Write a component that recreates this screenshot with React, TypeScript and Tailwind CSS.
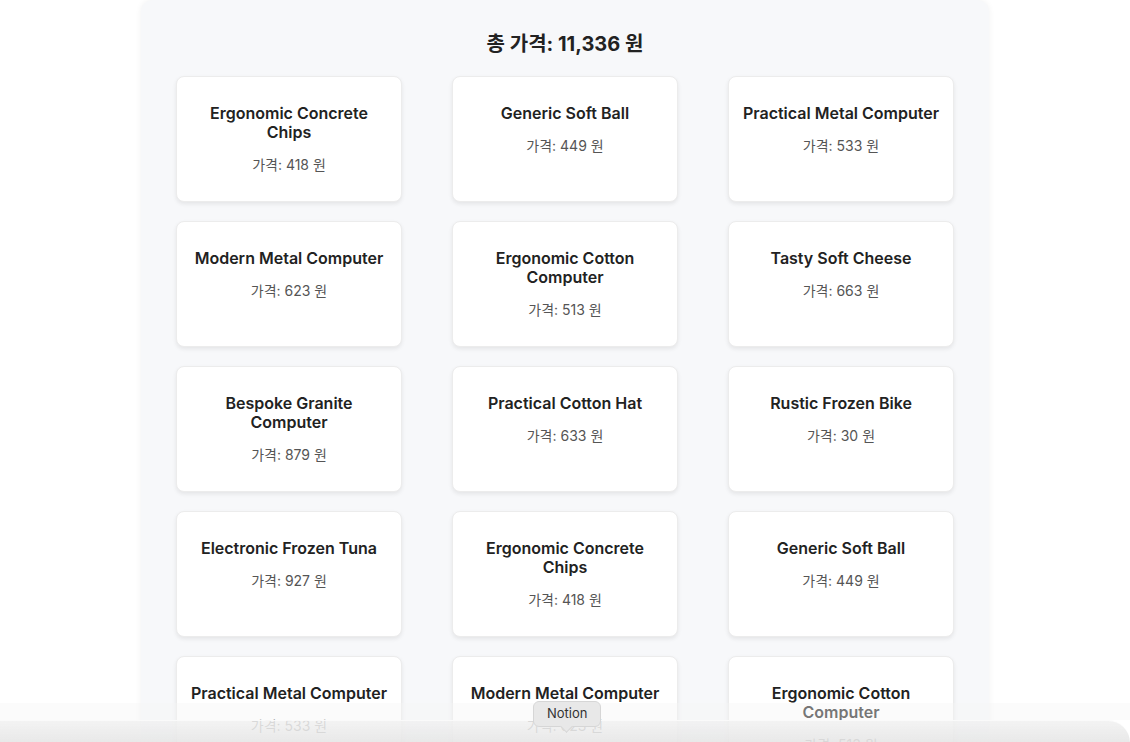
const products = [
  { name: 'Ergonomic Concrete Chips', price: 418 },
  { name: 'Generic Soft Ball', price: 449 },
  { name: 'Practical Metal Computer', price: 533 },
  { name: 'Modern Metal Computer', price: 623 },
  { name: 'Ergonomic Cotton Computer', price: 513 },
  { name: 'Tasty Soft Cheese', price: 663 },
  { name: 'Bespoke Granite Computer', price: 879 },
  { name: 'Practical Cotton Hat', price: 633 },
  { name: 'Rustic Frozen Bike', price: 30 },
  { name: 'Electronic Frozen Tuna', price: 927 },
  { name: 'Ergonomic Concrete Chips', price: 418 },
  { name: 'Generic Soft Ball', price: 449 },
  { name: 'Practical Metal Computer', price: 533 },
  { name: 'Modern Metal Computer', price: 623 },
  { name: 'Ergonomic Cotton Computer', price: 513 },
]

function ProductCard({ name, price }: { name: string; price: number }) {
  return (
    <div className="h-[126px] rounded-lg bg-white border border-[#ececec] shadow-[0_2px_4px_rgba(0,0,0,0.08)] px-[12px] pt-[27px] text-center">
      <h3 className="text-[16px] leading-[19px] font-semibold text-[#222]">{name}</h3>
      <p className="mt-[12px] text-[14px] leading-[21px] text-[#555]">가격: {price} 원</p>
    </div>
  )
}

export default function App() {
  return (
    <div className="min-h-screen bg-white" style={{ fontFamily: 'Inter, "Noto Sans CJK KR", sans-serif' }}>
      <div className="mx-auto w-[848px] rounded-t-[12px] bg-[#f7f8fa] shadow-[0_0_6px_rgba(0,0,0,0.06)] px-[35px] pt-[30px] pb-10">
        <h2 className="text-center text-[20px] leading-[28px] font-bold text-[#222] mb-[18px]">총 가격: 11,336 원</h2>

        <div className="grid grid-cols-3 gap-x-[50px] gap-y-[19px]">
          {products.map((p, i) => (
            <ProductCard key={i} name={p.name} price={p.price} />
          ))}
        </div>
      </div>

      {/* dock overlay */}
      <div className="fixed inset-x-0 bottom-[22px] h-[17px] bg-[#f4f4f4]/40"></div>
      <div className="fixed inset-x-0 bottom-0 h-[22px] rounded-tr-[40px] border-t border-white/80 bg-linear-to-b from-[#f1f1f1]/85 to-[#e6e6e6]/90"></div>

      <div className="fixed left-[533px] bottom-[15px]">
        <div className="relative rounded-md border border-[#d6d6d6] bg-[#e8e8e8] px-[13px] h-[26px] flex items-center text-[13px] text-[#333]">
          Notion
          <div className="absolute left-1/2 -bottom-[5px] -ml-[5px] h-[9px] w-[9px] rotate-45 border-r border-b border-[#d6d6d6] bg-[#e8e8e8]"></div>
        </div>
      </div>
    </div>
  )
}
